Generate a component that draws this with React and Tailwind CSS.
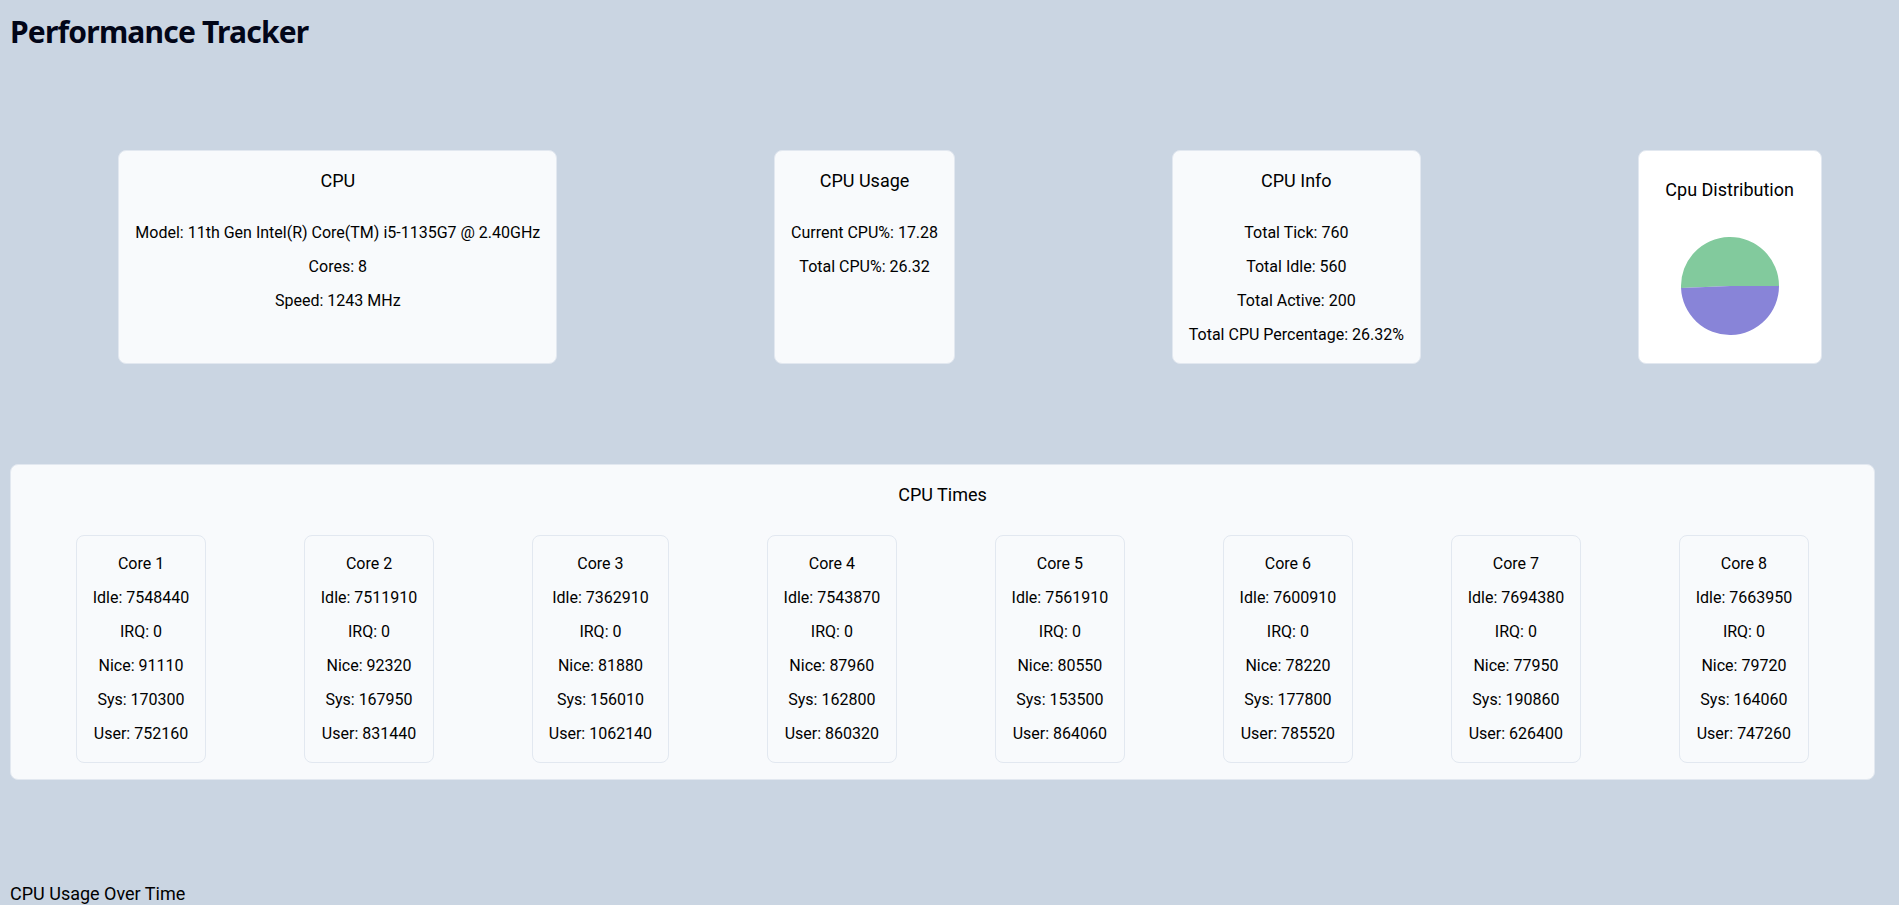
const cpu = {
    model: '11th Gen Intel(R) Core(TM) i5-1135G7 @ 2.40GHz',
    cores: 8,
    speed: 1243,
};

const cores = [
    { idle: 7548440, irq: 0, nice: 91110, sys: 170300, user: 752160 },
    { idle: 7511910, irq: 0, nice: 92320, sys: 167950, user: 831440 },
    { idle: 7362910, irq: 0, nice: 81880, sys: 156010, user: 1062140 },
    { idle: 7543870, irq: 0, nice: 87960, sys: 162800, user: 860320 },
    { idle: 7561910, irq: 0, nice: 80550, sys: 153500, user: 864060 },
    { idle: 7600910, irq: 0, nice: 78220, sys: 177800, user: 785520 },
    { idle: 7694380, irq: 0, nice: 77950, sys: 190860, user: 626400 },
    { idle: 7663950, irq: 0, nice: 79720, sys: 164060, user: 747260 },
];

const history = [12, 18, 15, 22, 17, 26, 19, 24, 17, 21, 28, 17];

function Card({ title, children }) {
    return (
        <div className="flex flex-col gap-2.5 rounded-lg border border-slate-200 bg-slate-50 p-4 text-center">
            <h2 className="mb-4 text-lg leading-7">{title}</h2>
            {children}
        </div>
    );
}

function PieSlices() {
    // green from 0deg round to ~182deg, purple the rest
    return (
        <svg width="150" height="104" viewBox="0 0 150 104">
            <path d="M75 52 L124 52 A49 49 0 1 0 26.04 53.97 Z" fill="#82ca9d" />
            <path d="M75 52 L26.04 53.97 A49 49 0 0 0 124 52 Z" fill="#8884d8" />
        </svg>
    );
}

function UsageChart() {
    const w = 1900;
    const h = 400;
    const step = w / (history.length - 1);
    const points = history
        .map((v, i) => `${i * step},${h - 40 - (v / 40) * (h - 80)}`)
        .join(' ');

    return (
        <svg width={w} height={h} className="block">
            <polyline points={points} fill="none" stroke="#8884d8" strokeWidth="2" />
        </svg>
    );
}

export default function App() {
    return (
        <div className="min-h-screen bg-slate-300 pb-[2600px] pl-2.5 pr-6 pt-[14px] font-['Roboto','Noto_Sans',sans-serif] text-black">
            <div className="flex flex-col gap-25">
                <h1 className="font-['Noto_Sans','Roboto',sans-serif] text-3xl font-bold leading-9 tracking-[-0.8px] text-slate-950">
                    Performance Tracker
                </h1>

                <div className="flex w-[1920px] items-stretch justify-around">
                    <Card title="CPU">
                        <p>Model: {cpu.model}</p>
                        <p>Cores: {cpu.cores}</p>
                        <p>Speed: {cpu.speed} MHz</p>
                    </Card>

                    <Card title="CPU Usage">
                        <p>Current CPU%: 17.28</p>
                        <p>Total CPU%: 26.32</p>
                    </Card>

                    <Card title="CPU Info">
                        <p>Total Tick: 760</p>
                        <p>Total Idle: 560</p>
                        <p>Total Active: 200</p>
                        <p>Total CPU Percentage: 26.32%</p>
                    </Card>

                    <div className="flex flex-col items-center justify-center rounded-lg border border-slate-200 bg-white p-4 text-center">
                        <h2 className="mb-[30px] text-lg leading-7">Cpu Distribution</h2>
                        <PieSlices />
                    </div>
                </div>

                <div className="flex flex-col gap-2.5 rounded-lg border border-slate-200 bg-slate-50 p-4">
                    <h2 className="mb-4 text-center text-lg leading-7">CPU Times</h2>
                    <div className="flex justify-around">
                        {cores.map((core, i) => (
                            <div
                                key={i}
                                className="flex flex-col gap-2.5 rounded-lg border border-slate-200 p-4 text-center"
                            >
                                <p>Core {i + 1}</p>
                                <p>Idle: {core.idle}</p>
                                <p>IRQ: {core.irq}</p>
                                <p>Nice: {core.nice}</p>
                                <p>Sys: {core.sys}</p>
                                <p>User: {core.user}</p>
                            </div>
                        ))}
                    </div>
                </div>

                <div>
                    <h2 className="text-lg leading-7">CPU Usage Over Time</h2>
                    <UsageChart />
                </div>
            </div>
        </div>
    );
}
